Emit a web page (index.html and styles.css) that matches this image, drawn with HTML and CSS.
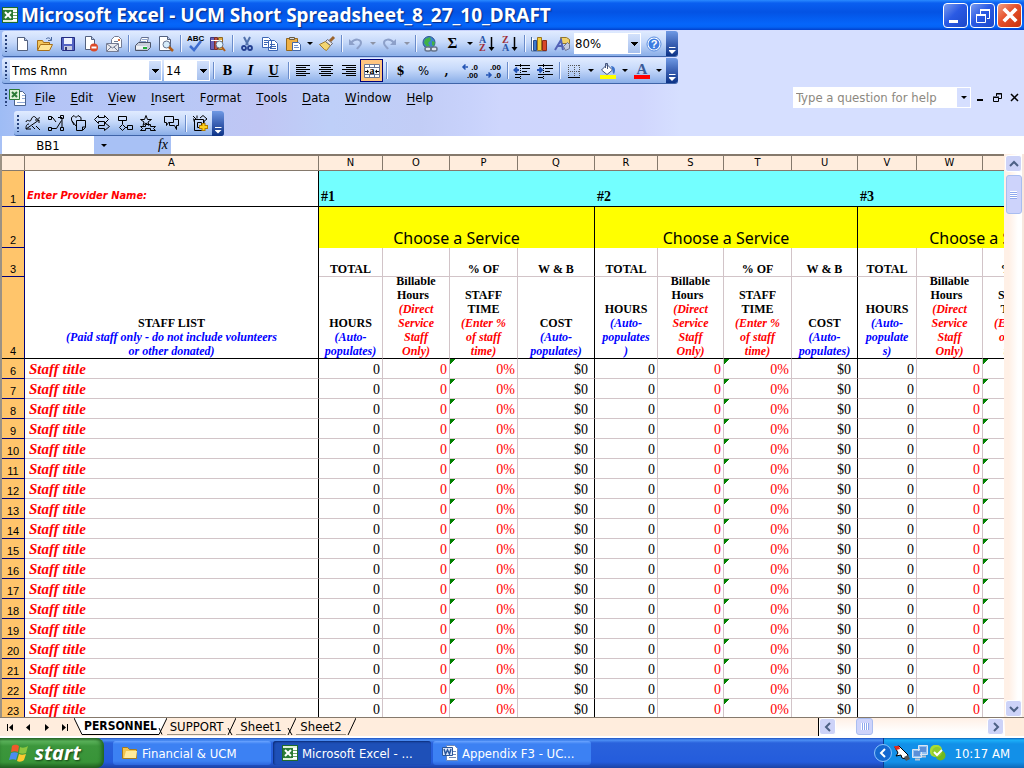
FILE: index.html
```html
<!DOCTYPE html>
<html lang="en">
<head>
<meta charset="utf-8">
<title>Microsoft Excel - UCM Short Spreadsheet_8_27_10_DRAFT</title>
<link rel="stylesheet" href="styles.css">
</head>
<body>
<svg class="defs" aria-hidden="true">
  <symbol id="excel" viewBox="0 0 16 16"><path fill="#1f6b2c" d="M0 0h16v16H0z"/><path fill="#dff0d8" d="M1 1h14v14H1z"/><path fill="#fff" d="M10 3h5v11h-5z"/><path stroke="#6aa564" d="M10 5.500h5M10 8.500h5M10 11.500h5"/><path fill="#2c7a35" d="M1 3h10v10H1z"/><path stroke="#fff" stroke-width="2" d="M3 5l6 6M9 5l-6 6"/></symbol>
  <symbol id="dock-close" viewBox="0 0 16 16"><path fill="none" stroke="#fff" stroke-width="3" d="M3 3l10 10M13 3L3 13"/></symbol>
</svg>
<div class="window">
  <header class="titlebar">
    <svg class="app-icon" width="16" height="16"><use href="#excel"/></svg>
    <h1 class="title">Microsoft Excel - UCM Short Spreadsheet_8_27_10_DRAFT</h1>
    <button class="win-btn" aria-label="Minimize"><svg width="22" height="22"><path fill="#fff" d="M4 16h9v3H4z"/></svg></button>
    <button class="win-btn" aria-label="Restore"><svg width="22" height="22" fill="none" stroke="#fff"><path stroke-width="2" d="M8 6h10M4 11h10"/><path d="M8.500 10V6M17.500 6v8.500H15M4.500 11v7.500h9V11"/></svg></button>
    <button class="win-btn win-close" aria-label="Close"><svg width="20" height="20"><use href="#dock-close"/></svg></button>
  </header>

  <div class="dock">
    <div class="toolbar" role="toolbar" aria-label="Standard">
      <span class="grip"></span>
      <button class="tool" aria-label="New"><svg viewBox="0 0 16 16"><path fill="#fff" stroke="#53617f" d="M3.500 1.500h7l3 3v10h-10z"/><path fill="#b7c9ee" stroke="#53617f" d="M10.500 1.500v3h3"/></svg></button>
      <button class="tool" aria-label="Open"><svg viewBox="0 0 16 16"><path fill="#f4c65c" stroke="#a87019" d="M.5 14V4.500h5l1 2h6v3"/><path fill="#ffe596" stroke="#a87019" d="M.5 14.500l3-6h12l-3 6z"/><path fill="none" stroke="#46649c" d="M9 3c2-2 4-1 5 1M14.500 1v3.500H11"/></svg></button>
      <button class="tool" aria-label="Save"><svg viewBox="0 0 16 16"><path fill="#5464c4" stroke="#252d80" d="M1.500 1.500h13v13h-12l-1-1z"/><path fill="#eef2ff" d="M4 2h8v6H4z"/><path fill="#c8cbe0" d="M4 10h8v4H4z"/><path fill="#333b75" d="M5 11h2v3H5z"/></svg></button>
      <button class="tool" aria-label="Permission"><svg viewBox="0 0 16 16"><path fill="#fff" stroke="#53617f" d="M2.500 .5h6l3 3v10h-9z"/><path fill="#b7c9ee" stroke="#53617f" d="M8.500 .5v3h3"/><circle cx="11" cy="11.500" r="4" fill="#dc4a28"/><path fill="#fff" d="M8.500 10.500h5v2h-5z"/></svg></button>
      <button class="tool" aria-label="E-mail"><svg viewBox="0 0 16 16"><path fill="#fff" stroke="#747c94" d="M5.500 7V3.500l3-3h4l3 3v8h-3"/><path fill="#e9e9ee" stroke="#747c94" d="M.5 7.500h12v8H.5z"/><path fill="none" stroke="#747c94" d="M1 15l4-4M12 15l-4-4M1 8l5.500 4L12 8M8 5.500h4"/><path fill="#d86c40" d="M12 3h2v2h-2z"/></svg></button>
      <span class="sep"></span>
      <button class="tool" aria-label="Print"><svg viewBox="0 0 16 16"><path fill="#fff" stroke="#647090" d="M4.500 7l2-5.500h7L12 7z"/><path stroke="#8fa5d0" d="M7 3.500h5M6 5.500h5"/><path fill="#c9cedb" stroke="#4b5367" d="M.5 9.500l3-3h12v5l-3 3H.5z"/><path fill="#eef0f5" d="M1 10h11v3H1z"/><path fill="#21ac38" d="M8 11h4v2H8z"/></svg></button>
      <button class="tool" aria-label="Print Preview"><svg viewBox="0 0 16 16"><path fill="#fff" stroke="#53617f" d="M1.500 .5h8l3 3v11h-11z"/><path fill="#b7c9ee" stroke="#53617f" d="M9.500 .5v3h3"/><circle cx="8.500" cy="8.500" r="3.500" fill="#d6ecfa" stroke="#6b7690"/><path stroke="#b05d18" stroke-width="2.500" d="M11 11l4 4"/></svg></button>
      <span class="sep"></span>
      <button class="tool" aria-label="Spelling"><svg viewBox="0 0 16 16"><text class="glyph-abc" x="0" y="5">ABC</text><path fill="none" stroke="#3c6cd0" stroke-width="2.500" d="M3 10l4 4 7-9"/></svg></button>
      <button class="tool" aria-label="Research"><svg viewBox="0 0 16 16"><path fill="#6961b7" stroke="#3e3a80" d="M.5 1.500h4v12h-4z"/><path fill="#bc4e43" stroke="#782e2a" d="M4.500 1.500h3v12h-3z"/><path fill="#e3ae43" stroke="#8f6724" d="M8.500 1.500h4v12h-4z"/><path stroke="#fff" d="M1 4.500h11"/><circle cx="9.500" cy="8.500" r="3.500" fill="#e0f3fc" stroke="#63718c"/><path stroke="#b05d18" stroke-width="2" d="M12 11l3 4"/></svg></button>
      <span class="sep"></span>
      <button class="tool" aria-label="Cut"><svg viewBox="0 0 16 16"><path stroke="#5272ac" stroke-width="2" d="M5 1l4 8M11 1L7 9"/><g fill="none" stroke="#243f91" stroke-width="1.800"><circle cx="5" cy="12" r="2"/><circle cx="11" cy="12" r="2"/></g></svg></button>
      <button class="tool" aria-label="Copy"><svg viewBox="0 0 16 16"><g fill="#fff" stroke="#3c66b4"><path d="M.5 1.500h6l3 3v7h-9zM6.500 4.500h6l3 3v7h-9z"/><path d="M2 4.500h4M2 6.500h4M2 8.500h3M8 8.500h5M8 10.500h6M8 12.500h6"/></g></svg></button>
      <button class="tool" aria-label="Paste"><svg viewBox="0 0 16 16"><path fill="#efb146" stroke="#94671e" d="M1.500 2.500h11v12h-11z"/><path fill="#d4d5d9" stroke="#6a5b40" d="M4.500 3.500v-2h5v2z"/><path fill="#fff" stroke="#4568a7" d="M7.500 6.500h6l2 2v6h-8z"/><path stroke="#7393ce" d="M9 9.500h4M9 11.500h5"/></svg></button>
      <button class="drop" aria-label="Paste options"></button>
      <button class="tool" aria-label="Format Painter"><svg viewBox="0 0 16 16"><path fill="#f2d572" stroke="#a27c2c" d="M.5 8.500l6-3 5 4-4 5-2-1z"/><path fill="#e8e8ef" stroke="#68656c" d="M6.500 5.500l2-2 5 4-2 2z"/><path stroke="#9c642c" stroke-width="3" d="M11 5l4-4"/></svg></button>
      <span class="sep"></span>
      <button class="tool" aria-label="Undo" disabled><svg viewBox="0 0 16 16"><path fill="none" stroke="#8da0c9" stroke-width="2" d="M3 7c4-5 10-4 10 0 0 3-3 4-4 6"/><path fill="#8da0c9" d="M1 3v6h6z"/></svg></button>
      <button class="drop drop-off" aria-label="Undo list" disabled></button>
      <button class="tool" aria-label="Redo" disabled><svg viewBox="0 0 16 16"><path fill="none" stroke="#8da0c9" stroke-width="2" d="M12 7C8 2 2 3 2 7c0 3 3 4 4 6"/><path fill="#8da0c9" d="M14 3v6H8z"/></svg></button>
      <button class="drop drop-off" aria-label="Redo list" disabled></button>
      <span class="sep"></span>
      <button class="tool" aria-label="Insert Hyperlink"><svg viewBox="0 0 16 16"><circle cx="7" cy="6.500" r="6" fill="#3c83cb" stroke="#2b5590"/><path fill="#40b247" d="M3 3l5-2 1 3-3 3 2 3-3 1-3-4zM10 5l3 1-1 4-2-1z"/><g fill="#dfe5ee" stroke="#65738a" stroke-width="1.500"><rect x="3" y="11" width="6" height="4" rx="2"/><rect x="9" y="11" width="6" height="4" rx="2"/></g></svg></button>
      <button class="tool glyph-sigma" aria-label="AutoSum">Σ</button>
      <button class="drop" aria-label="AutoSum options"></button>
      <button class="tool" aria-label="Sort Ascending"><svg viewBox="0 0 16 16"><text class="glyph-sort blue" x="0" y="7">A</text><text class="glyph-sort red" x="0" y="15">Z</text><path stroke="#000" stroke-width="1.500" d="M12.500 1v12"/><path d="M9.500 11h6l-3 4z"/></svg></button>
      <button class="tool" aria-label="Sort Descending"><svg viewBox="0 0 16 16"><text class="glyph-sort red" x="0" y="7">Z</text><text class="glyph-sort blue" x="0" y="15">A</text><path stroke="#000" stroke-width="1.500" d="M12.500 1v12"/><path d="M9.500 11h6l-3 4z"/></svg></button>
      <span class="sep"></span>
      <button class="tool" aria-label="Chart Wizard"><svg viewBox="0 0 16 16"><path fill="#fff" stroke="#466794" d="M.5 1v14h15"/><path fill="#3e79cd" stroke="#264c8d" d="M2.500 4.500h3v10h-3z"/><path fill="#f1ce3b" stroke="#9b751f" d="M6.500 1.500h4v13h-4z"/><path fill="#d74829" stroke="#8b2c1a" d="M11.500 4.500h4v10h-4z"/></svg></button>
      <button class="tool" aria-label="Drawing"><svg viewBox="0 0 16 16"><path fill="#f1d16a" stroke="#96792b" d="M6.500 1.500h6l3 2v4h-8z"/><path fill="#c5cbe0" stroke="#6c7495" d="M9.500 10.500l4-4 2 2v4l-4 2z"/><path fill="none" stroke="#5262b6" stroke-width="2" d="M1 14L7 4l2 10M3 10h6"/></svg></button>
      <label class="combo combo-zoom"><select aria-label="Zoom"><option>80%</option></select></label>
      <button class="tool" aria-label="Help"><svg viewBox="0 0 16 16"><circle cx="8" cy="8" r="7" fill="#fff" stroke="#5a8de0"/><circle cx="8" cy="8" r="5.500" fill="#3e7de2"/><text class="glyph-help" x="8" y="12">?</text></svg></button>
      <button class="cap" aria-label="Toolbar options"></button>
    </div>

    <div class="toolbar" role="toolbar" aria-label="Formatting">
      <span class="grip"></span>
      <label class="combo combo-font"><select aria-label="Font"><option>Tms Rmn</option></select></label>
      <label class="combo combo-size"><select aria-label="Font size"><option>14</option></select></label>
      <span class="sep"></span>
      <button class="tool glyph-serif">B</button>
      <button class="tool glyph-serif glyph-i">I</button>
      <button class="tool glyph-serif glyph-u">U</button>
      <span class="sep"></span>
      <button class="tool" aria-label="Align Left"><svg viewBox="0 0 16 16"><path stroke="#000" d="M1 2.500h14M1 4.500h10M1 6.500h14M1 8.500h10M1 10.500h14M1 12.500h10"/></svg></button>
      <button class="tool" aria-label="Center"><svg viewBox="0 0 16 16"><path stroke="#000" d="M1 2.500h14M3 4.500h10M1 6.500h14M3 8.500h10M1 10.500h14M3 12.500h10"/></svg></button>
      <button class="tool" aria-label="Align Right"><svg viewBox="0 0 16 16"><path stroke="#000" d="M1 2.500h14M5 4.500h10M1 6.500h14M5 8.500h10M1 10.500h14M5 12.500h10"/></svg></button>
      <button class="tool tool-on" aria-label="Merge and Center" aria-pressed="true"><svg viewBox="0 0 16 16"><path fill="#fff" stroke="#6b7794" d="M.5 1.500h15v13H.5z"/><path stroke="#6b7794" d="M0 4.500h16M0 11.500h16M5.500 2v3M10.500 2v3M5.500 11v4M10.500 11v4"/><path stroke="#000" d="M1 8.500h3M12 8.500h3"/><path d="M3 6.500l2 2-2 2zM13 6.500l-2 2 2 2z"/><text class="glyph-a" x="8" y="11">a</text></svg></button>
      <span class="sep"></span>
      <button class="tool glyph-serif">$</button>
      <button class="tool glyph-pct">%</button>
      <button class="tool glyph-serif">,</button>
      <button class="tool" aria-label="Increase Decimal"><svg viewBox="0 0 16 16"><path fill="none" stroke="#2454b4" stroke-width="1.500" d="M1 4h5M3.500 1.500L1 4l2.500 2.500"/><text class="glyph-dec" x="16" y="7">.0</text><text class="glyph-dec" x="16" y="15">.00</text></svg></button>
      <button class="tool" aria-label="Decrease Decimal"><svg viewBox="0 0 16 16"><path fill="none" stroke="#2454b4" stroke-width="1.500" d="M1 12h5M3.500 9.500L6 12l-2.500 2.500"/><text class="glyph-dec" x="16" y="7">.00</text><text class="glyph-dec" x="16" y="15">.0</text></svg></button>
      <span class="sep"></span>
      <button class="tool" aria-label="Decrease Indent"><svg viewBox="0 0 16 16"><path stroke="#000" d="M1 2.500h15M8 5.500h8M8 8.500h5M1 11.500h15M1 14.500h5"/><path stroke="#000" stroke-dasharray="1 1" d="M6.500 1v15"/><path fill="none" stroke="#2454b4" stroke-width="2" d="M0 7h5M3 4.500L.5 7 3 9.500"/></svg></button>
      <button class="tool" aria-label="Increase Indent"><svg viewBox="0 0 16 16"><path stroke="#000" d="M1 2.500h15M8 5.500h8M8 8.500h5M1 11.500h15M1 14.500h5"/><path stroke="#000" stroke-dasharray="1 1" d="M6.500 1v15"/><path fill="none" stroke="#2454b4" stroke-width="2" d="M0 7h5M2.500 4.500L5 7 2.500 9.500"/></svg></button>
      <span class="sep"></span>
      <button class="tool" aria-label="Borders"><svg viewBox="0 0 16 16"><path fill="none" stroke="#555" stroke-dasharray="1 1" d="M2 2.500h12M2 8.500h12M2.500 2v12M8.500 2v12M13.500 2v12"/><path stroke="#000" d="M2 14.500h12"/></svg></button>
      <button class="drop" aria-label="Border styles"></button>
      <button class="tool" aria-label="Fill Color"><svg viewBox="0 0 16 16"><path fill="#fff" stroke="#43547c" d="M1.500 7L7 1.500 12.500 7 7 11.500z"/><path fill="none" stroke="#43547c" d="M5.500 5V.5h2V6"/><path fill="#3d72ca" d="M11 3c4 0 5 4 3 8-2-1-1-4-2-5z"/><path fill="#ff0" d="M0 12h16v4H0z"/></svg></button>
      <button class="drop" aria-label="Fill colors"></button>
      <button class="tool" aria-label="Font Color"><svg viewBox="0 0 16 16"><text class="glyph-color" x="8" y="11">A</text><path fill="red" d="M0 12h16v4H0z"/></svg></button>
      <button class="drop" aria-label="Font colors"></button>
      <button class="cap" aria-label="Toolbar options"></button>
    </div>

    <nav class="menubar">
      <span class="grip"></span>
      <svg class="menu-icon" width="18" height="18" viewBox="0 0 18 18"><path fill="#fff" stroke="#4c638d" d="M5.500 2.500h8l3 3v11h-11z"/><path stroke="#8fa7d4" d="M13 6.500h3M13 9.500h3M8 13.500h8"/><path fill="#dff0d8" stroke="#2c7a35" d="M.5 .5h10v10H.5z"/><path stroke="#2c7a35" stroke-width="2" d="M3 3l5 5M8 3L3 8"/></svg>
      <button class="menu"><u>F</u>ile</button>
      <button class="menu"><u>E</u>dit</button>
      <button class="menu"><u>V</u>iew</button>
      <button class="menu"><u>I</u>nsert</button>
      <button class="menu">F<u>o</u>rmat</button>
      <button class="menu"><u>T</u>ools</button>
      <button class="menu"><u>D</u>ata</button>
      <button class="menu"><u>W</u>indow</button>
      <button class="menu"><u>H</u>elp</button>
      <div class="ask"><input class="ask-input" type="text" placeholder="Type a question for help" aria-label="Type a question for help"><button class="drop" aria-label="Recent questions"></button></div>
      <div class="doc-controls">
        <button aria-label="Minimize document"><svg width="9" height="9"><path d="M1 6h6v2H1z"/></svg></button>
        <button aria-label="Restore document"><svg width="9" height="9" fill="none" stroke="#000"><path d="M3 1h6M.5 4.500h5v4h-5zM3.500 3V.5h5v5H6M0 4h6"/></svg></button>
        <button aria-label="Close document"><svg width="9" height="9"><path stroke="#000" stroke-width="1.500" d="M1 1l7 7M8 1L1 8"/></svg></button>
      </div>
    </nav>

    <div class="toolbar toolbar-shapes" role="toolbar" aria-label="AutoShapes">
      <span class="grip"></span>
      <button class="tool" aria-label="Lines"><svg class="line" viewBox="0 0 16 16"><path d="M1 7c1-4 4 1 5-2s3-5 5-2 2-1 4 0M1 14L14 5M10 5h4v3M10 14l-3-3M15 15l-4-4M4 9c-3 0-3 3-3 5h5"/></svg></button>
      <button class="tool" aria-label="Connectors"><svg class="line" viewBox="0 0 16 16"><path d="M3 2.500h2M10 2.500h4v10M4 13.500h4.500l5-8"/><path d="M.5 1.500h3v3h-3zM12.500 .5h3v3h-3zM.5 12.500h3v3h-3zM12.500 12.500h3v3h-3zM5 3l3 4"/></svg></button>
      <button class="tool" aria-label="Basic Shapes"><svg class="line" viewBox="0 0 16 16"><path d="M3 10L.5 5V2.500L3 .5l2 2 2-2 3 2v3"/><path d="M5.500 5.500h9v7l-3 3h-6zM11.500 15v-3h3M1 6l4 5"/></svg></button>
      <button class="tool" aria-label="Block Arrows"><svg class="line" viewBox="0 0 16 16"><path d="M.5 4.500l4-4v2h6v-2l4 4-4 4v-2h-6v2z"/><path d="M4.500 10.500h6v-3l5 4-5 4v-2h-6z"/></svg></button>
      <button class="tool" aria-label="Flowchart"><svg class="line" viewBox="0 0 16 16"><path d="M1.500 1.500h8v4h-8zM5.500 6v3M8 12.500h2M5.500 9.500l3 3-3 3-3-3zM10.500 10.500h5v4h-5z"/></svg></button>
      <button class="tool" aria-label="Stars and Banners"><svg class="line" viewBox="0 0 16 16"><path d="M6 .5l1.500 4h4L8 7l1 3.500L6 8l-3 2.500L4 7 .5 4.500h4z"/><path d="M.5 15.500l2-2-2-2h5v-2h5v2h5l-2 2 2 2h-5v-2h-5v2z"/></svg></button>
      <button class="tool" aria-label="Callouts"><svg class="line" viewBox="0 0 16 16"><path d="M1.500 1.500h9v6h-5l-2 3v-3h-2z"/><path d="M6.500 8v2.500h5l2 4v-4h2v-6h-4"/></svg></button>
      <span class="sep"></span>
      <button class="tool" aria-label="More AutoShapes"><svg class="line" viewBox="0 0 16 16"><path d="M2.500 4.500h9v11h-9zM1 1l4 4M5 .5v3M8 3l3-2.500L15 4l-4 3M1.500 3.500l1 4M12 6v6M5.500 7.500h4v5h-4z"/><path stroke="#b07c00" stroke-width="4" d="M7 12h9M11.500 8v8"/><path stroke="#ffd21c" stroke-width="2" d="M8 12h7M11.500 9v6"/></svg></button>
      <button class="cap" aria-label="Toolbar options"></button>
    </div>
  </div>

  <div class="formula-bar">
    <input class="name-box" type="text" value="BB1" aria-label="Name box">
    <button class="drop" aria-label="Names"></button>
    <button class="fx" aria-label="Insert function">fx</button>
    <input class="formula" type="text" aria-label="Formula">
  </div>

  <main class="work">
    <div class="grid">
      <table class="sheet">
        <colgroup><col class="w-head"><col class="w-a"><col class="w-n"><col class="w-o"><col class="w-p"><col class="w-q"><col class="w-r"><col class="w-s"><col class="w-p"><col class="w-s"><col class="w-v"><col class="w-s"><col class="w-p"><col class="w-q"></colgroup>
        <thead>
          <tr class="letters"><th><th>A<th>N<th>O<th>P<th>Q<th>R<th>S<th>T<th>U<th>V<th>W<th><th></tr>
        </thead>
        <tbody class="top">
          <tr class="row1"><th>1<td class="provider">Enter Provider Name:<td class="num" colspan="4">#1<td class="num" colspan="4">#2<td class="num" colspan="4">#3</tr>
          <tr class="row2"><th>2<td class="staff-list" rowspan="3">STAFF LIST<br><i class="blue">(Paid staff only - do not include volunteers<br>or other donated)</i><td class="service edge" colspan="4">Choose a Service<td class="service edge" colspan="4">Choose a Service<td class="service edge" colspan="4">Choose a Service</tr>
          <tr class="row3"><th>3<td>TOTAL<td><td>% OF<td class="edge">W &amp; B<td>TOTAL<td><td>% OF<td class="edge">W &amp; B<td>TOTAL<td><td>% OF<td class="edge"></tr>
          <tr class="row4"><th>4
            <td><div class="head">HOURS<i class="blue">(Auto-<br>populates)</i></div>
            <td><div class="head">Billable<br>Hours&nbsp;&nbsp;<i class="red">(Direct<br>Service<br>Staff<br>Only)</i></div>
            <td><div class="head">STAFF<br>TIME<i class="red">(Enter %<br>of staff<br>time)</i></div>
            <td class="edge"><div class="head">COST<i class="blue">(Auto-<br>populates)</i></div>
            <td><div class="head">HOURS<i class="blue">(Auto-<br>populates<br>)</i></div>
            <td><div class="head">Billable<br>Hours&nbsp;&nbsp;<i class="red">(Direct<br>Service<br>Staff<br>Only)</i></div>
            <td><div class="head">STAFF<br>TIME<i class="red">(Enter %<br>of staff<br>time)</i></div>
            <td class="edge"><div class="head">COST<i class="blue">(Auto-<br>populates)</i></div>
            <td><div class="head">HOURS<i class="blue">(Auto-<br>populate<br>s)</i></div>
            <td><div class="head">Billable<br>Hours&nbsp;&nbsp;<i class="red">(Direct<br>Service<br>Staff<br>Only)</i></div>
            <td><div class="head">STAFF<br>TIME<i class="red">(Enter %<br>of staff<br>time)</i></div>
            <td class="edge">
          </tr>
        </tbody>
        <tbody class="data">
          <tr><th>6<td>Staff title<td>0<td>0<td>0%<td>$0<td>0<td>0<td>0%<td>$0<td>0<td>0<td><td></tr>
          <tr><th>7<td>Staff title<td>0<td>0<td>0%<td>$0<td>0<td>0<td>0%<td>$0<td>0<td>0<td><td></tr>
          <tr><th>8<td>Staff title<td>0<td>0<td>0%<td>$0<td>0<td>0<td>0%<td>$0<td>0<td>0<td><td></tr>
          <tr><th>9<td>Staff title<td>0<td>0<td>0%<td>$0<td>0<td>0<td>0%<td>$0<td>0<td>0<td><td></tr>
          <tr><th>10<td>Staff title<td>0<td>0<td>0%<td>$0<td>0<td>0<td>0%<td>$0<td>0<td>0<td><td></tr>
          <tr><th>11<td>Staff title<td>0<td>0<td>0%<td>$0<td>0<td>0<td>0%<td>$0<td>0<td>0<td><td></tr>
          <tr><th>12<td>Staff title<td>0<td>0<td>0%<td>$0<td>0<td>0<td>0%<td>$0<td>0<td>0<td><td></tr>
          <tr><th>13<td>Staff title<td>0<td>0<td>0%<td>$0<td>0<td>0<td>0%<td>$0<td>0<td>0<td><td></tr>
          <tr><th>14<td>Staff title<td>0<td>0<td>0%<td>$0<td>0<td>0<td>0%<td>$0<td>0<td>0<td><td></tr>
          <tr><th>15<td>Staff title<td>0<td>0<td>0%<td>$0<td>0<td>0<td>0%<td>$0<td>0<td>0<td><td></tr>
          <tr><th>16<td>Staff title<td>0<td>0<td>0%<td>$0<td>0<td>0<td>0%<td>$0<td>0<td>0<td><td></tr>
          <tr><th>17<td>Staff title<td>0<td>0<td>0%<td>$0<td>0<td>0<td>0%<td>$0<td>0<td>0<td><td></tr>
          <tr><th>18<td>Staff title<td>0<td>0<td>0%<td>$0<td>0<td>0<td>0%<td>$0<td>0<td>0<td><td></tr>
          <tr><th>19<td>Staff title<td>0<td>0<td>0%<td>$0<td>0<td>0<td>0%<td>$0<td>0<td>0<td><td></tr>
          <tr><th>20<td>Staff title<td>0<td>0<td>0%<td>$0<td>0<td>0<td>0%<td>$0<td>0<td>0<td><td></tr>
          <tr><th>21<td>Staff title<td>0<td>0<td>0%<td>$0<td>0<td>0<td>0%<td>$0<td>0<td>0<td><td></tr>
          <tr><th>22<td>Staff title<td>0<td>0<td>0%<td>$0<td>0<td>0<td>0%<td>$0<td>0<td>0<td><td></tr>
          <tr><th>23<td>Staff title<td>0<td>0<td>0%<td>$0<td>0<td>0<td>0%<td>$0<td>0<td>0<td><td></tr>
        </tbody>
      </table>
    </div>
    <div class="vscroll">
      <button class="scroll-btn" aria-label="Scroll up"><svg width="10" height="8"><path fill="none" stroke="#4d6185" stroke-width="2" d="M1 6l4-4 4 4"/></svg></button>
      <span class="thumb thumb-v"></span>
      <button class="scroll-btn scroll-end" aria-label="Scroll down"><svg width="10" height="8"><path fill="none" stroke="#4d6185" stroke-width="2" d="M1 2l4 4 4-4"/></svg></button>
    </div>
  </main>

  <div class="tabs">
    <div class="tab-nav">
      <button aria-label="First sheet"><svg width="8" height="7"><path d="M0 0h1v7H0zM6 0v7L2 3.500z"/></svg></button>
      <button aria-label="Previous sheet"><svg width="8" height="7"><path d="M5 0v7L1 3.500z"/></svg></button>
      <button aria-label="Next sheet"><svg width="8" height="7"><path d="M2 0v7l4-3.500z"/></svg></button>
      <button aria-label="Last sheet"><svg width="8" height="7"><path d="M1 0v7l4-3.500zM6 0h1v7H6z"/></svg></button>
    </div>
    <svg class="slant" width="10" height="18"><path fill="#fff" d="M0 0h10v17H8z"/><path stroke="#000" d="M0 0l8 16.500h2" fill="none"/></svg>
    <button class="tab tab-active">PERSONNEL</button>
    <svg class="slant" width="10" height="18"><path fill="#fff" d="M0 0h10L2 17H0z"/><path stroke="#000" d="M10 0L2 16.500H0M2 10l3 6.500" fill="none"/></svg>
    <button class="tab tab-support">SUPPORT</button>
    <svg class="slant" width="10" height="18"><path stroke="#000" d="M10 0L2 17M2 10l4 7" fill="none"/></svg>
    <button class="tab tab-sheet">Sheet1</button>
    <svg class="slant" width="10" height="18"><path stroke="#000" d="M10 0L2 17M2 10l4 7" fill="none"/></svg>
    <button class="tab tab-sheet">Sheet2</button>
    <svg class="slant" width="10" height="18"><path stroke="#000" d="M10 0L2 17" fill="none"/></svg>
    <div class="hscroll">
      <button class="scroll-btn" aria-label="Scroll left"><svg width="8" height="10"><path fill="none" stroke="#4d6185" stroke-width="2" d="M6 1L2 5l4 4"/></svg></button>
      <span class="thumb thumb-h"></span>
      <button class="scroll-btn scroll-end-h" aria-label="Scroll right"><svg width="8" height="10"><path fill="none" stroke="#4d6185" stroke-width="2" d="M2 1l4 4-4 4"/></svg></button>
    </div>
  </div>

  <footer class="taskbar">
    <button class="start"><svg width="20" height="20" viewBox="0 0 20 20"><path fill="#f0592b" d="M3 3c3-2 5-1 7 0L9 9C7 8 5 8 2 9z"/><path fill="#8cc63f" d="M11 4c2 1 5 1 8-1l-2 7c-2 1-5 1-7 0z"/><path fill="#4a8cf0" d="M2 10c2-1 5-1 7 0l-2 7c-2-1-4-1-7 0z"/><path fill="#fcc930" d="M10 11c2 1 4 1 7 0l-2 6c-2 2-5 2-7 1z"/></svg>start</button>
    <button class="task"><svg width="16" height="16" viewBox="0 0 16 16"><path fill="#f3c64e" stroke="#a47b20" d="M.5 13.500v-11h5l2 2h7v9z"/><path fill="#ffeb9c" d="M2 13l2-7h11l-1 7z"/></svg><span>Financial &amp; UCM</span></button>
    <button class="task task-active"><svg width="16" height="16"><use href="#excel"/></svg><span>Microsoft Excel - ...</span></button>
    <button class="task"><svg width="16" height="16" viewBox="0 0 16 16"><path fill="#fff" stroke="#6f88b8" d="M4.500 .5h8l3 3v12h-11z"/><path stroke="#6f88b8" d="M11 6.500h3M11 9.500h3M7 12.500h7"/><path fill="#dbe6fb" stroke="#2b579a" d="M.5 2.500h10v8H.5z"/><path fill="none" stroke="#2b579a" stroke-width="1.500" d="M2 4l1.500 5 2-4 2 4L9 4"/></svg><span>Appendix F3 - UC...</span></button>
    <div class="tray">
      <button class="tray-toggle" aria-label="Show hidden icons"><svg width="8" height="10"><path fill="none" stroke="#fff" stroke-width="2" d="M6 1L2 5l4 4"/></svg></button>
      <svg width="16" height="16" viewBox="0 0 16 16"><path fill="#fff" stroke="#000" d="M1 2l4-1 9 9-2 4-4-1-1-3-5 1 2-3z"/><path fill="#e32b1c" d="M0 1h5l1 3-4 1z"/><path fill="#555" d="M10 12l4-2 2 4-4 2z"/></svg>
      <svg width="16" height="16" viewBox="0 0 16 16"><path fill="#8fc0f3" stroke="#dbe5f2" d="M6.500 .5h9v9h-9zM.5 4.500h9v8h-9z"/><path fill="#5b8fd8" d="M8 2h6v5H8zM2 6h6v5H2z"/><path stroke="#b8c3d4" stroke-width="2" d="M3 14.500h5M10 11.500h4"/></svg>
      <svg width="16" height="16" viewBox="0 0 16 16"><rect width="12" height="12" rx="5" fill="#a8dc35"/><circle cx="10.500" cy="10.500" r="5" fill="#72b81f"/><circle cx="7" cy="7" r="5" fill="#91cc2c"/><path fill="none" stroke="#fff" stroke-width="2" d="M4 7l3 3 5-5"/></svg>
      <time>10:17 AM</time>
    </div>
  </footer>
</div>
</body>
</html>
```
FILE: styles.css
```css
* { box-sizing: border-box; }
html, body { height: 100%; }
body {
  margin: 0;
  overflow: hidden;
  font-family: "DejaVu Sans Condensed", "DejaVu Sans", sans-serif;
  font-size: 13px;
  color: #000;
}
button, input, select {
  font: inherit;
  color: inherit;
  border: 0;
  padding: 0;
  margin: 0;
  background: none;
  border-radius: 0;
}
button { display: flex; align-items: center; justify-content: center; }
svg { flex: none; }
.defs { display: none; }
.red { color: #f00; }
.blue { color: #00f; }

.window { display: flex; flex-direction: column; height: 100vh; }

/* Title bar */
.titlebar {
  display: flex;
  align-items: center;
  gap: 2px;
  flex: none;
  height: 30px;
  padding: 0 2px;
  background: linear-gradient(#2a8aff 0, #0a5ff0 3px, #0453e4 12px, #0566fb 24px, #0463f5 27px, #0140cc 30px);
}
.title {
  flex: 1;
  margin: 0;
  padding-left: 1px;
  overflow: hidden;
  white-space: nowrap;
  font: bold 19px/28px "Noto Sans", sans-serif;
  color: #fff;
  text-shadow: 1px 1px 1px #0a2a80;
}
.win-btn {
  width: 25px;
  height: 25px;
  border: 1px solid #fff;
  border-radius: 4px;
  background: linear-gradient(135deg, #7b9cf0, #2a5ae4 45%, #1c48c8);
}
.win-close { background: linear-gradient(135deg, #f0a083, #e6502a 45%, #c8320c); }

/* Toolbars */
.dock {
  flex: none;
  padding: 1px 0 0 2px;
  background: linear-gradient(90deg, #9ebcf5 0, #b4c4f6 48px, #b8c8f6 180px, #c0c6f4 260px, #becff8 330px, #c2cdf6 420px, #c8d2fb 470px, #ced6fd 500px, #d0d6fd 640px, #d6dfff 680px);
}
.toolbar {
  display: flex;
  align-items: center;
  width: 676px;
  max-width: 100%;
  height: 26px;
  margin-bottom: 1px;
  border-bottom: 1px solid #3f64a8;
  border-radius: 3px;
  background: linear-gradient(#e0ebff, #c6d9fa 45%, #8aaee8);
}
.toolbar + .menubar { margin-top: -1px; }
.toolbar-shapes { width: 210px; height: 25px; margin: 0 0 0 12px; }
.grip {
  flex: none;
  width: 3px;
  height: 17px;
  margin: 0 2px 0 3px;
  background: repeating-linear-gradient(#27417b 0 2px, transparent 2px 4px);
  background-clip: content-box;
  padding-right: 1px;
}
.toolbar-shapes .grip { margin: 0 1px 0 3px; }
.tool { flex: none; width: 23px; height: 23px; }
.tool svg { width: 16px; height: 16px; overflow: visible; }
.tool-on { border: 1px solid #00007b; background: #ffc580; }
.line { fill: none; stroke: #000; }
.sep {
  flex: none;
  width: 6px;
  height: 17px;
  background: linear-gradient(90deg, transparent 3px, #6a8ccb 3px 4px, #f1f5ff 4px 5px, transparent 5px);
}
.drop { flex: none; width: 11px; height: 20px; }
.drop::before {
  content: "";
  border: 3px solid transparent;
  border-top-color: #000;
  border-bottom: 0;
}
.drop-off::before { border-top-color: #8d93a5; }
.cap {
  align-items: flex-end;
  width: 12px;
  height: 25px;
  margin-left: auto;
  padding-bottom: 2px;
  border-radius: 0 3px 3px 0;
  background: linear-gradient(#6f99e4, #3c62b4 50%, #0c3286);
}
.cap::before {
  content: "";
  width: 7px;
  height: 7px;
  background: linear-gradient(#fff 0 1px, transparent 1px 3px, #fff 3px);
  clip-path: polygon(0 0, 100% 0, 100% 50%, 50% 100%, 0 50%);
}
.combo { display: grid; flex: none; height: 21px; border: 1px solid #fff; background: #fff; }
.combo select {
  grid-area: 1 / 1;
  min-width: 0;
  appearance: none;
  padding-left: 1px;
  font-size: 13px;
}
.combo::after {
  content: "";
  grid-area: 1 / 1;
  justify-self: end;
  width: 12px;
  pointer-events: none;
  background:
    linear-gradient(#000, #000) 3px 8px / 7px 1px no-repeat,
    linear-gradient(#000, #000) 4px 9px / 5px 1px no-repeat,
    linear-gradient(#000, #000) 5px 10px / 3px 1px no-repeat,
    linear-gradient(#000, #000) 6px 11px / 1px 1px no-repeat,
    linear-gradient(#d3e1fb, #a6c0ee);
}
.combo-zoom { width: 67px; margin: 0 1px; }
.combo-zoom select { padding-left: 0; }
.combo-font { width: 152px; margin-right: 2px; }
.combo-size { width: 46px; }
.glyph-abc { font: bold 8px "Liberation Sans", sans-serif; }
.glyph-sigma { font: bold 15px "Liberation Serif", serif; }
.glyph-sort { font: bold 10px "Liberation Serif", serif; }
.glyph-sort.blue { fill: #2b56a8; }
.glyph-sort.red { fill: #a02c35; }
.glyph-help { font: bold 11px "Liberation Sans", sans-serif; fill: #fff; text-anchor: middle; }
.glyph-serif { font: bold 13px "DejaVu Serif Condensed", "DejaVu Serif", serif; }
.glyph-i { font-style: italic; }
.glyph-u { text-decoration: underline; }
.glyph-a { font: bold 10px "Liberation Serif", serif; text-anchor: middle; }
.glyph-dec { font: bold 8px "Liberation Sans", sans-serif; text-anchor: end; }
.glyph-color { font: bold 15px "Liberation Serif", serif; fill: #3a5b98; text-anchor: middle; }

/* Menu bar */
.menubar { display: flex; align-items: center; gap: 15px; height: 27px; }
.menubar .grip { margin-right: -15px; }
.menu-icon { margin: 0 -7px 0 1px; }
.menu { flex: none; }
.menu u { text-underline-offset: 2px; }
.ask { display: flex; width: 178px; height: 21px; margin-left: auto; border: 1px solid #fff; background: #fff; }
.ask-input { flex: 1; min-width: 0; padding-left: 2px; outline: 0; }
.ask-input::placeholder { color: #8c8880; opacity: 1; }
.ask .drop { width: 13px; height: 19px; background: #d6dfff; }
.doc-controls { display: flex; gap: 8px; margin-left: -10px; padding-right: 5px; }

/* Formula bar */
.formula-bar {
  display: flex;
  flex: none;
  height: 18px;
  padding-left: 2px;
  background: #a8c1f5;
}
.name-box { width: 92px; background: #fff; text-align: center; }
.formula-bar .drop { width: 20px; height: 18px; }
.fx { width: 57px; justify-content: flex-end; padding-right: 3px; font: italic 14px "Liberation Serif", serif; }
.formula { flex: 1; min-width: 0; background: #fff; }

/* Worksheet */
.work {
  display: flex;
  flex: 1;
  min-height: 0;
  padding-left: 2px;
  background: linear-gradient(90deg, #9c9284 2px, #fff3ec 2px);
}
.grid { flex: 1; min-width: 0; overflow: hidden; background: #fff; border-top: 2px solid #85796c; }
.sheet { width: 0; table-layout: fixed; border-collapse: separate; border-spacing: 0; }
.w-head { width: 23px; }
.w-a { width: 294px; }
.w-n { width: 64px; }
.w-o { width: 67px; }
.w-p { width: 68px; }
.w-q { width: 77px; }
.w-r { width: 63px; }
.w-s { width: 66px; }
.w-v { width: 59px; }
.sheet th, .sheet td {
  padding: 0;
  overflow: hidden;
  border: 0 solid #d2c4c8;
  border-width: 0 1px 1px 0;
  white-space: nowrap;
  vertical-align: bottom;
}
.sheet th { font: 11px/13px "Liberation Sans", sans-serif; text-align: center; }
.sheet .letters th {
  height: 15px;
  border-color: #85796c;
  background: #ffeddd;
  font: 11px/14px "DejaVu Sans Condensed", sans-serif;
}
.top th, .data th { background: #ffc56b; border-color: #00007b; }
.top td { font: bold 12px/14px "Liberation Serif", serif; text-align: center; }
.row1 { height: 36px; }
.row2 { height: 41px; }
.row3 { height: 29px; }
.row4 { height: 82px; }
.top .row1 td { border-bottom-color: #000; text-align: left; padding-left: 2px; }
.top .provider { padding-bottom: 3px; border-right-color: #000; font: italic bold 11px/14px "DejaVu Sans Condensed", sans-serif; color: #f00; }
.top .num { border-right: 0; background: #73ffff; font: bold 14px/18px "Liberation Serif", serif; }
.top .staff-list { border-color: #000; }
.top .service { border-bottom: 0; background: #ff0; font: 16px/20px "Noto Sans", sans-serif; }
.top .edge { border-right-color: #000; }
.row4 td, .row4 th { border-bottom-color: #000; }
.head { display: flex; flex-direction: column; justify-content: flex-end; height: 81px; }
.data tr { height: 20px; }
.data td { font: 14px/16px "Liberation Sans Narrow", "Liberation Serif", serif; text-align: right; padding: 0 2px 0 0; }
.data td:nth-child(2) {
  padding: 0 0 0 4px;
  border-right-color: #000;
  font: italic bold 15px/17px "Liberation Serif", serif;
  text-align: left;
  color: #f00;
}
.data td:nth-child(4n) { color: #f00; }
.data td:nth-child(4n + 5) {
  color: #f00;
  background: linear-gradient(135deg, #008000 4px, transparent 4px);
}
.data td:nth-child(4n + 6) { padding-right: 6px; border-right-color: #000; }

/* Scroll bars */
.vscroll {
  display: flex;
  flex-direction: column;
  flex: none;
  align-items: center;
  gap: 3px;
  width: 20px;
  padding: 1px 2px 0 1px;
  background: linear-gradient(90deg, #fff0e6 5px, #fff 14px, #fff 18px, #f8e8de 18px);
}
.scroll-btn {
  flex: none;
  width: 17px;
  height: 17px;
  border: 1px solid #fff;
  border-radius: 3px;
  background: #cdd3f8;
}
.scroll-end { margin-top: auto; }
.thumb { flex: none; border: 1px solid #a9bdf0; border-radius: 3px; }
.thumb-v {
  width: 16px;
  height: 39px;
  background: repeating-linear-gradient(#fff 0 1px, #8fa9ee 1px 2px) center / 7px 8px no-repeat, #cdd3fb;
}
.thumb-h {
  width: 17px;
  height: 17px;
  margin-left: 20px;
  background: repeating-linear-gradient(90deg, #fff 0 1px, #8fa9ee 1px 2px) center / 8px 7px no-repeat, #cdd3fb;
}

/* Sheet tabs */
.tabs {
  display: flex;
  flex: none;
  height: 21px;
  padding-left: 2px;
  border-top: 1px solid #85796c;
  border-bottom: 2px solid #fff;
  background: #ffeddd;
}
.tab-nav { display: flex; width: 72px; }
.tab-nav button { flex: 1; }
.tab { flex: none; height: 17px; border-bottom: 1px solid #9c9284; }
.tab-active { width: 73px; background: #fff; border-color: #000; font-weight: bold; font-size: 12px; }
.tab-support { width: 59px; }
.tab-sheet { width: 50px; }
.hscroll {
  display: flex;
  width: 206px;
  margin-left: auto;
  padding-right: 20px;
  border-left: 1px solid #000;
  background: linear-gradient(90deg, transparent 186px, #ffeddd 186px), linear-gradient(#fff0e6, #fff 14px);
}
.scroll-end-h { margin-left: auto; }

/* Taskbar */
.taskbar {
  display: flex;
  flex: none;
  align-items: center;
  gap: 2px;
  height: 30px;
  background: linear-gradient(#1c50c0 0, #4d90f5 2px, #2a62dc 5px, #245cdc 24px, #1c42a4 30px);
  color: #fff;
}
.start {
  gap: 5px;
  width: 104px;
  height: 30px;
  margin-right: 7px;
  padding-right: 14px;
  border-radius: 0 8px 8px 0;
  background: linear-gradient(#2c6e2c 0, #5cb45c 3px, #3c963c 8px, #389438 24px, #246424 30px);
  box-shadow: inset -2px 0 4px #1c5c1c;
  font: italic bold 20px/24px "Noto Sans", sans-serif;
  text-shadow: 1px 1px 2px #123c12;
}
.task {
  flex: 0 1 158px;
  justify-content: flex-start;
  gap: 4px;
  min-width: 0;
  height: 24px;
  padding-left: 9px;
  border-radius: 3px;
  background: linear-gradient(#6aa4ff 0, #3c81f3 3px, #3c81f3 20px, #2c66dc 24px);
  white-space: nowrap;
}
.task-active { background: #1e50b8; box-shadow: inset 1px 1px 2px #0c2c78; }
.tray {
  display: flex;
  flex: none;
  align-items: center;
  gap: 2px;
  height: 30px;
  margin-left: auto;
  padding-right: 14px;
  background: linear-gradient(#0c60b8 0, #1cb0f8 2px, #1290e8 6px, #1290e8 24px, #0c68b8 30px);
  border-left: 1px solid #0c3c90;
}
.tray-toggle {
  width: 18px;
  height: 18px;
  margin-left: -10px;
  border: 1px solid #8cc4fc;
  border-radius: 50%;
  background: #1468d0;
}
.tray time { padding-left: 6px; }
```
